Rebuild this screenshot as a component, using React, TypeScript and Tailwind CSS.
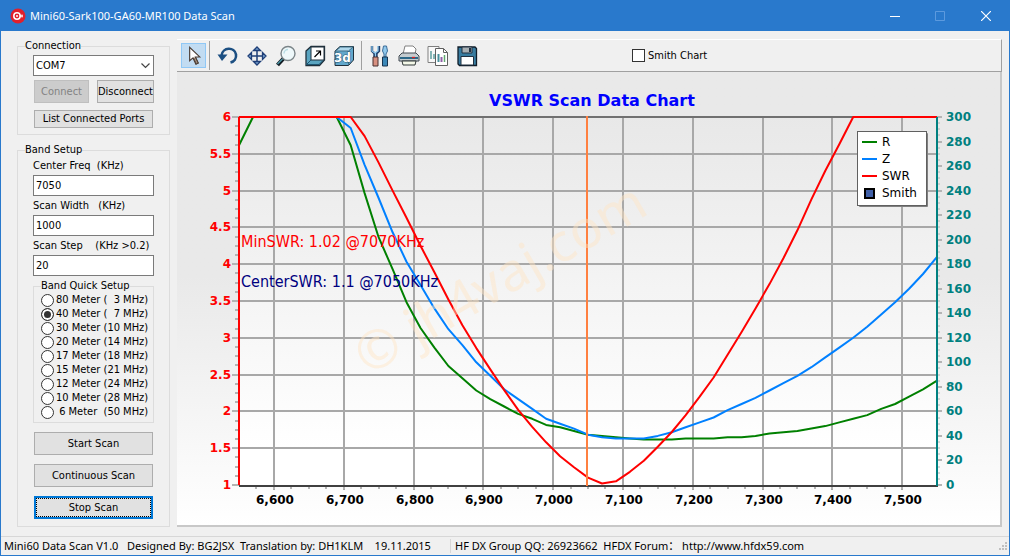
import { ReactNode, useState } from "react";

const BANDS = [
  "80 Meter (  3 MHz)",
  "40 Meter (  7 MHz)",
  "30 Meter (10 MHz)",
  "20 Meter (14 MHz)",
  "17 Meter (18 MHz)",
  "15 Meter (21 MHz)",
  "12 Meter (24 MHz)",
  "10 Meter (28 MHz)",
  " 6 Meter  (50 MHz)",
];

const FIELDS = [
  { id: "center", label: "Center Freq  (KHz)", value: "7050" },
  { id: "width", label: "Scan Width   (KHz)", value: "1000" },
  { id: "step", label: "Scan Step    (KHz >0.2)", value: "20" },
];

// one sample every 20 KHz, from 6550 to 7550
const R = [
  277, 300, 300, 300, 300, 300, 300, 300, 277, 238, 202, 176, 149, 128, 112, 97, 87, 77, 70, 64, 58, 54, 49, 47, 44, 41,
  40, 39, 38, 37, 37, 37, 38, 38, 38, 39, 39, 40, 42, 43, 44, 46, 48, 51, 54, 57, 62, 66, 72, 78, 85,
];
const Z = [
  300, 300, 300, 300, 300, 300, 300, 300, 291, 261, 234, 206, 182, 163, 144, 127, 114, 100, 89, 78, 70, 62, 54, 50, 46,
  41, 39, 38, 38, 38, 40, 43, 47, 51, 55, 61, 66, 71, 77, 83, 89, 96, 104, 112, 120, 129, 139, 149, 160, 172, 186,
];
const SWR = [
  6, 6, 6, 6, 6, 6, 6, 6, 6, 5.74, 5.38, 5, 4.63, 4.25, 3.89, 3.52, 3.17, 2.86, 2.57, 2.29, 2.02, 1.79, 1.58, 1.39,
  1.24, 1.1, 1.02, 1.05, 1.18, 1.33, 1.52, 1.72, 1.95, 2.2, 2.46, 2.77, 3.08, 3.4, 3.73, 4.08, 4.46, 4.88, 5.27, 5.63,
  6, 6, 6, 6, 6, 6, 6,
];

const LEFT = 62;
const RIGHT = 760;
const TOP = 45;
const BOTTOM = 413;

const fx = (f: number) => LEFT + ((f - 6550) / 1000) * (RIGHT - LEFT);
const swrY = (v: number) => BOTTOM - ((v - 1) / 5) * (BOTTOM - TOP);
const ohmY = (v: number) => BOTTOM - (v / 300) * (BOTTOM - TOP);
const px = (n: number) => Math.round(n);
const range = (n: number) => Array.from({ length: n }, (_, i) => i);
const line = (data: number[], y: (v: number) => number) =>
  data.map((v, i) => `${fx(6550 + i * 20).toFixed(1)},${y(v).toFixed(1)}`).join(" ");

function ScanChart() {
  return (
    <svg viewBox="0 0 823 453" className="block w-full font-['DejaVu_Sans']" role="img" aria-label="VSWR Scan Data Chart">
      <defs>
        <linearGradient id="plot" x1="0" y1="0" x2="0" y2="1">
          <stop offset="0" stopColor="#e8e8e8" />
          <stop offset="0.9" stopColor="#ffffff" />
        </linearGradient>
      </defs>

      <text x="415" y="34" textAnchor="middle" fill="#0000ff" className="text-[16px] font-bold">
        VSWR Scan Data Chart
      </text>

      <rect x={LEFT} y={TOP} width={RIGHT - LEFT} height={BOTTOM - TOP} fill="url(#plot)" />

      {/* grid */}
      <g stroke="#a8a8a8" strokeWidth="2">
        {range(9).map(i => {
          const y = px(swrY(1.5 + i * 0.5));
          return <path key={i} d={`M${LEFT} ${y}H${RIGHT}`} />;
        })}
        {range(10).map(i => {
          const x = px(fx(6600 + i * 100));
          return <path key={i} d={`M${x} ${TOP}V${BOTTOM + 5}`} />;
        })}
      </g>

      {/* ticks */}
      <g stroke="#b4b4b4" strokeWidth="2">
        {range(41).map(i => {
          const y = px(swrY(1 + i * 0.125));
          return <path key={i} d={`M${i % 4 ? 58 : 55} ${y}H${LEFT}`} />;
        })}
        {range(61).map(i => {
          const y = px(ohmY(i * 5));
          return <path key={i} strokeWidth={i % 4 ? 1 : 2} d={`M${RIGHT} ${y}H${i % 4 ? 763 : 765}`} />;
        })}
        {range(38).map(i => {
          const x = px(fx(6575 + i * 25));
          return <path key={i} d={`M${x} ${BOTTOM}V${BOTTOM + 4}`} />;
        })}
      </g>

      <path d={`M${LEFT} ${TOP}H${RIGHT}`} stroke="#707070" strokeWidth="2" />
      <path d={`M${LEFT} ${BOTTOM + 1}H${RIGHT + 1}`} stroke="#404040" strokeWidth="2" />

      {/* axis labels */}
      <g className="text-[12px] font-bold">
        {range(11).map(i => (
          <text key={i} x="54" y={px(swrY(1 + i * 0.5)) + 4} textAnchor="end" fill="#ff0000">
            {1 + i * 0.5}
          </text>
        ))}
        {range(16).map(i => (
          <text key={i} x="769" y={px(ohmY(i * 20)) + 4} fill="#008080">
            {i * 20}
          </text>
        ))}
        {range(10).map(i => (
          <text key={i} x={px(fx(6600 + i * 100)) + 1} y="432" textAnchor="middle" fill="#000000">
            {(6600 + i * 100).toLocaleString("en-US")}
          </text>
        ))}
      </g>

      {/* series */}
      <g fill="none" strokeWidth="2" strokeLinejoin="round">
        <polyline points={line(R, ohmY)} stroke="#008000" />
        <polyline points={line(Z, ohmY)} stroke="#0080ff" />
        <polyline points={line(SWR, swrY)} stroke="#ff0000" />
      </g>
      <path d={`M${LEFT} ${TOP}V${BOTTOM}`} stroke="#ff0000" strokeWidth="2" />
      <path d={`M${RIGHT} ${TOP}V${BOTTOM + 1}`} stroke="#008080" strokeWidth="2" />
      <path d={`M410 ${TOP - 1}V${BOTTOM + 1}`} stroke="#ff8040" strokeWidth="2" />

      <g className="font-['DejaVu_Sans_Condensed'] text-[16px]">
        <text x="64" y="175" fill="#ff0000">MinSWR: 1.02 @7070KHz</text>
        <text x="64" y="215" fill="#000080">CenterSWR: 1.1 @7050KHz</text>
      </g>

      <text
        transform="translate(191 304) rotate(-30)"
        fill="#ffe4c4"
        fillOpacity="0.45"
        className="font-['Noto_Sans'] text-[53px]"
      >
        © jh4vaj.com
      </text>

      {/* legend */}
      <rect x="682" y="61" width="69" height="74" rx="1" fill="#808080" />
      <rect x="680.5" y="59.500" width="69" height="74" fill="#ffffff" stroke="#606060" />
      <g strokeWidth="2">
        <path d="M685 70H700" stroke="#008000" />
        <path d="M685 87H700" stroke="#0080ff" />
        <path d="M685 104H700" stroke="#ff0000" />
      </g>
      <rect x="688" y="117" width="9" height="9" fill="#4060a8" stroke="#000000" strokeWidth="2" />
      <g className="text-[12px]" fill="#000000">
        <text x="705" y="74">R</text>
        <text x="705" y="91">Z</text>
        <text x="705" y="108">SWR</text>
        <text x="705" y="125">Smith</text>
      </g>
    </svg>
  );
}

/* ---- toolbar drawings ---- */

function Icon({ children }: { children: ReactNode }) {
  return (
    <svg width="24" height="24" viewBox="0 0 24 24" fill="none" aria-hidden="true">
      {children}
    </svg>
  );
}

const PointerIcon = (
  <Icon>
    <path d="M8 3v14l3.500-3 3 6.500 2.500-1.200-3-6.300h4.500z" fill="#fff" stroke="#4a3c34" strokeWidth="1.200" />
    <path d="M12 14l3 6.300 1.800-.8-3-6.500" fill="#b09a88" stroke="#4a3c34" strokeWidth="1" />
  </Icon>
);

const UndoIcon = (
  <Icon>
    <path d="M5.500 11.500C6.500 3 18.500 2.500 20 10.500c.6 4-1.800 7-5.500 8" stroke="#1c4f82" strokeWidth="2.600" />
    <path d="M1.500 10.500h10L6 17z" fill="#1c4f82" />
  </Icon>
);

const MoveIcon = (
  <Icon>
    <path d="M12 4v16M4 12h16" stroke="#1f3f78" strokeWidth="1.500" />
    <path d="M8.500 6.500L12 3l3.500 3.500zM8.500 17.500L12 21l3.500-3.500zM6.500 8.500L3 12l3.500 3.500zM17.500 8.500L21 12l-3.500 3.500z" fill="#7aa4d0" stroke="#1f3f78" strokeWidth="1.300" />
  </Icon>
);

const ZoomIcon = (
  <Icon>
    <path d="M9.500 14.500L3.500 21" stroke="#101820" strokeWidth="4" />
    <path d="M8.500 15L3.500 20" stroke="#4c98a8" strokeWidth="1.500" />
    <circle cx="14" cy="9.500" r="7" fill="#eef8fa" stroke="#7a8488" strokeWidth="1.400" />
    <path d="M10 9.500a4 4 0 0 1 4-4" stroke="#b8dce4" strokeWidth="1.500" />
  </Icon>
);

const DepthIcon = (
  <Icon>
    <path d="M3 7l5-4.500h13.500V16L16.500 21.500H3z" fill="#5aa4c0" stroke="#20303c" strokeWidth="1.300" />
    <path d="M8 3h13v13H8z" fill="#fff" stroke="#20303c" />
    <path d="M8 16l-5 5M4 20.500h12l4-4" stroke="#1e5470" />
    <path d="M11.500 13L17 7.500M13 7h4.500v4.500" stroke="#000" strokeWidth="1.200" />
  </Icon>
);

const ThreeDIcon = (
  <Icon>
    <path d="M3 7l5-4.500h13.500V16L16.500 21.500H3z" fill="#62a8cc" stroke="#20303c" />
    <path d="M3.500 7l5-4H21l-4.500 4z" fill="#b0d8ec" stroke="#407088" />
    <path d="M16.500 7.500V21" stroke="#407088" />
    <text x="2" y="18" fill="#fff" stroke="#285068" strokeWidth="1" paintOrder="stroke" className="font-['DejaVu_Sans'] text-[12px] font-bold">
      3d
    </text>
  </Icon>
);

const ToolsIcon = (
  <Icon>
    <path d="M4 2v5l2.500 2.500V13h2V9.500L11 7V2" stroke="#20406c" strokeWidth="2.400" />
    <path d="M4 2v5l3 2 3-2V2M7.500 9v4" stroke="#90ccf0" strokeWidth="1.200" />
    <path d="M5 13h5v9H5z" fill="#d89080" stroke="#483030" />
    <path d="M15.500 2h3l1 5-1.500 3v3h-2v-3L14.500 7z" fill="#90c8ec" stroke="#3c6c98" />
    <path d="M14.500 13h5v9h-5z" fill="#3c88b8" stroke="#183450" />
  </Icon>
);

const PrinterIcon = (
  <Icon>
    <path d="M6 10l2-8h8l3 3-1 5z" fill="#fff" stroke="#808080" />
    <path d="M2 12l3-3h14l3 3v5H2z" fill="#c4ccd0" stroke="#404850" />
    <path d="M3 13h18v2H3z" fill="#2c6888" />
    <path d="M15 13.500h3" stroke="#e02020" strokeWidth="1.300" />
    <path d="M5 17h14l-1 4H6z" fill="#f4f8e8" stroke="#303838" />
  </Icon>
);

const CopyIcon = (
  <Icon>
    <path d="M2 2.500h11v16H2z" fill="#f8f8f8" stroke="#808080" />
    <path d="M5 7v8M8 10v5" stroke="#60a0a0" strokeWidth="1.500" />
    <path d="M9.500 4.500h8l4 4v13h-12z" fill="#fff" stroke="#606060" />
    <path d="M17.500 4.500v4h4" stroke="#606060" />
    <path d="M12.500 10v8" stroke="#48909c" strokeWidth="2" />
    <path d="M15.500 13v5" stroke="#9060a8" strokeWidth="2" />
    <path d="M18.500 11v7" stroke="#60a870" strokeWidth="1.500" />
  </Icon>
);

const SaveIcon = (
  <Icon>
    <path d="M3 3h17l1.500 1.500V21.500H4.500L3 20z" fill="#387ca0" stroke="#101c28" strokeWidth="1.300" />
    <path d="M7 3h10v6H7z" fill="#a8b0b4" stroke="#203040" />
    <path d="M14 4h2v4h-2z" fill="#203040" />
    <path d="M6 12.500h12.500V21H6z" fill="#fff" stroke="#203040" />
  </Icon>
);

const VIEW_TOOLS = [
  { name: "Reset view", icon: UndoIcon },
  { name: "Move", icon: MoveIcon },
  { name: "Zoom", icon: ZoomIcon },
  { name: "Depth", icon: DepthIcon },
  { name: "3D", icon: ThreeDIcon },
];

const FILE_TOOLS = [
  { name: "Edit chart", icon: ToolsIcon },
  { name: "Print", icon: PrinterIcon },
  { name: "Copy", icon: CopyIcon },
  { name: "Save", icon: SaveIcon },
];

function ToolButton({ name, children }: { name: string; children: ReactNode }) {
  return (
    <button aria-label={name} className="flex h-[25px] w-[29px] items-center justify-center">
      {children}
    </button>
  );
}

function Toolbar() {
  return (
    <div className="flex h-[33px] items-center border-t border-r border-b border-t-white border-r-[#a0a0a0] border-b-[#a0a0a0] pl-1">
      <button aria-label="Select" className="flex h-[25px] w-[25px] items-center justify-center border border-[#90c8f6] bg-[#c2dcf2]">
        {PointerIcon}
      </button>
      <div className="mx-[3px] h-[29px] w-px bg-[#a0a0a0]" />
      {VIEW_TOOLS.map(t => (
        <ToolButton key={t.name} name={t.name}>{t.icon}</ToolButton>
      ))}
      <div className="mx-[3px] h-[29px] w-px bg-[#a0a0a0]" />
      {FILE_TOOLS.map(t => (
        <ToolButton key={t.name} name={t.name}>{t.icon}</ToolButton>
      ))}
      <label className="ml-[151px] flex items-center gap-[3px]">
        <input type="checkbox" className="size-[13px] appearance-none border border-[#333333] bg-white checked:bg-[#333333]" />
        Smith Chart
      </label>
    </div>
  );
}

/* ---- left column ---- */

const BUTTON = "h-[23px] border border-[#adadad] bg-[#e1e1e1] text-center whitespace-nowrap";

function ConnectionBox() {
  return (
    <fieldset className="min-w-0 border border-[#dcdcdc] px-[15px] pt-[2px] pb-[6px]">
      <legend className="-ml-2">Connection</legend>
      <div className="relative">
        <select aria-label="Port" className="h-[21px] w-full appearance-none border border-[#7a7a7a] bg-white px-[2px]">
          <option>COM7</option>
        </select>
        <svg className="pointer-events-none absolute top-[8px] right-[4px]" width="9" height="6" viewBox="0 0 9 6" fill="none">
          <path d="M.5.500l4 4 4-4" stroke="#444444" strokeWidth="1.200" />
        </svg>
      </div>
      <div className="mt-1 flex justify-between pl-px">
        <button disabled className="h-[23px] w-[55px] border border-[#bfbfbf] bg-[#cccccc] text-[#838383]">
          Connect
        </button>
        <button className={`${BUTTON} w-[57px]`}>Disconnect</button>
      </div>
      <div className="mt-[7px] px-px">
        <button className="block h-[18px] w-full border border-[#adadad] bg-[#e1e1e1]">List Connected Ports</button>
      </div>
    </fieldset>
  );
}

function BandBox() {
  const [band, setBand] = useState(1);

  return (
    <fieldset className="mt-2 min-w-0 border border-[#dcdcdc] px-[15px] pt-[2px] pb-[7px]">
      <legend className="-ml-2">Band Setup</legend>
      {FIELDS.map(f => (
        <div key={f.id} className="mb-[3px]">
          <label htmlFor={f.id} className="mb-[2px] block whitespace-pre">{f.label}</label>
          <input id={f.id} defaultValue={f.value} className="block h-[21px] w-full border border-[#7a7a7a] bg-white px-[2px]" />
        </div>
      ))}

      <fieldset className="min-w-0 border border-[#dcdcdc] px-[7px] pb-[3px]">
        <legend>Band Quick Setup</legend>
        {BANDS.map((name, i) => (
          <label key={name} className="flex h-[14px] items-center gap-[2px] whitespace-pre">
            <input
              type="radio"
              name="band"
              checked={band === i}
              onChange={() => setBand(i)}
              className="size-[13px] shrink-0 appearance-none rounded-full border border-[#333333] bg-white checked:bg-[#333333] checked:shadow-[inset_0_0_0_2px_#ffffff]"
            />
            {name}
          </label>
        ))}
      </fieldset>

      <div className="mt-[9px] flex flex-col gap-[9px] px-px">
        <button className={BUTTON}>Start Scan</button>
        <button className={BUTTON}>Continuous Scan</button>
        <button className="h-[23px] border-2 border-[#0078d7] bg-[#e1e1e1] outline-1 -outline-offset-3 outline-dotted outline-black">
          Stop Scan
        </button>
      </div>
    </fieldset>
  );
}

function TitleBar() {
  return (
    <header className="flex h-[30px] items-center bg-[#2979cc] pl-[9px] font-['Noto_Sans'] text-[11px] text-white">
      <svg width="16" height="16" viewBox="0 0 16 16" aria-hidden="true">
        <circle cx="8" cy="8" r="7.500" fill="#e0202c" />
        <circle cx="7" cy="8" r="3.200" fill="none" stroke="#fff" strokeWidth="1.500" />
        <path d="M9.500 8H13M12 6.500v3" stroke="#fff" />
        <circle cx="7" cy="8" r="1" fill="#fff" />
      </svg>
      <h1 className="ml-1 flex-1">Mini60-Sark100-GA60-MR100 Data Scan</h1>
      <button aria-label="Minimize" className="flex h-full w-[45px] items-center justify-center">
        <svg width="10" height="10" viewBox="0 0 10 10"><path d="M0 5.500h10" stroke="#fff" /></svg>
      </button>
      <button aria-label="Maximize" disabled className="flex h-full w-[45px] items-center justify-center">
        <svg width="10" height="10" viewBox="0 0 10 10"><path d="M.5.500h9v9h-9z" fill="none" stroke="#5c9ade" /></svg>
      </button>
      <button aria-label="Close" className="flex h-full w-[47px] items-center justify-center">
        <svg width="10" height="10" viewBox="0 0 10 10"><path d="M0 0l10 10M10 0L0 10" stroke="#fff" strokeWidth="1.200" /></svg>
      </button>
    </header>
  );
}

function StatusBar() {
  return (
    <footer className="flex h-[19px] items-center border-t border-[#d7d7d7] pl-[3px] font-['Noto_Sans','Noto_Sans_CJK_SC',sans-serif] text-[11px] whitespace-pre">
      <p className="w-[446px]">{"Mini60 Data Scan V1.0   Designed By: BG2JSX  Translation by: DH1KLM    19.11.2015"}</p>
      <p className="flex-1 border-l border-[#d7d7d7] pl-1">
        {"HF DX Group QQ: 26923662  HFDX Forum： http://www.hfdx59.com"}
      </p>
      <svg width="12" height="12" viewBox="0 0 12 12" fill="#bfbfbf" aria-hidden="true">
        <path d="M8 2h2v2H8zM8 5h2v2H8zM8 8h2v2H8zM5 5h2v2H5zM5 8h2v2H5zM2 8h2v2H2z" />
      </svg>
    </footer>
  );
}

export default function App() {
  return (
    <div className="flex min-h-screen flex-col border border-[#2979cc] bg-[#f0f0f0] font-['DejaVu_Sans_Condensed',sans-serif] text-[11px] leading-[14px] text-black">
      <TitleBar />
      <div className="flex flex-1 gap-[7px] pt-2 pr-[7px] pb-[9px] pl-4">
        <aside className="w-[153px] shrink-0">
          <ConnectionBox />
          <BandBox />
        </aside>
        <main className="flex min-w-0 flex-1 flex-col">
          <Toolbar />
          <div className="flex-1 border-r-2 border-b-2 border-[#c8c8c8] bg-linear-to-b from-[#e9e9e9] from-45% to-white">
            <ScanChart />
          </div>
        </main>
      </div>
      <StatusBar />
    </div>
  );
}
